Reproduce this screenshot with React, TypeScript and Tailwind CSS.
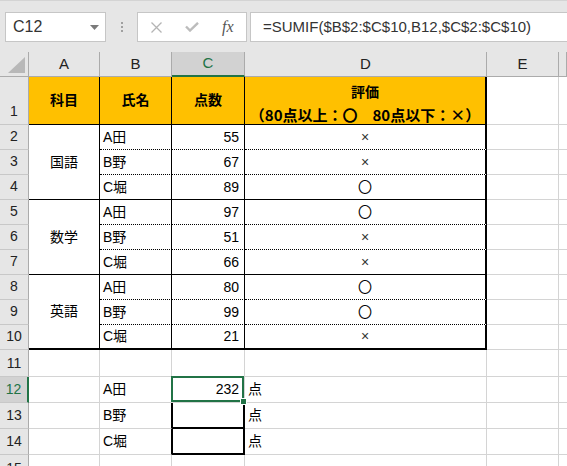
import React from "react";

const GRID = "border-r border-b border-[#d4d4d4]";
const HEAD = "flex items-center justify-center bg-[#e6e6e6] border-r border-b border-[#ababab] text-[15px] text-[#222]";
const ROWHEAD =
  "flex items-end justify-center pb-[2px] bg-[#e6e6e6] border-r border-b border-r-[#ababab] border-b-[#c8c8c8] text-[14px] text-[#222]";

type Row = { no: number; subject?: string; name: string; score: number; mark: string };

const rows: Row[] = [
  { no: 2, subject: "国語", name: "A田", score: 55, mark: "×" },
  { no: 3, name: "B野", score: 67, mark: "×" },
  { no: 4, name: "C堀", score: 89, mark: "〇" },
  { no: 5, subject: "数学", name: "A田", score: 97, mark: "〇" },
  { no: 6, name: "B野", score: 51, mark: "×" },
  { no: 7, name: "C堀", score: 66, mark: "×" },
  { no: 8, subject: "英語", name: "A田", score: 80, mark: "〇" },
  { no: 9, name: "B野", score: 99, mark: "〇" },
  { no: 10, name: "C堀", score: 21, mark: "×" },
];

const FormulaBar = () => (
  <div className="h-[52px] bg-[#e6e6e6] border-t border-[#d4d4d4] flex items-start pt-[11px]">
    <div className="ml-[5px] w-[101px] h-[30px] bg-white border border-[#c6c6c6] flex items-center justify-between pl-[7px] pr-[6px]">
      <span className="text-[16px] text-[#333]">C12</span>
      <svg width="9" height="5" viewBox="0 0 9 5">
        <path d="M0 0 H9 L4.5 5 Z" fill="#7a7a7a" />
      </svg>
    </div>
    <div className="w-[31px] h-[30px] flex flex-col items-center justify-center gap-[2px]">
      <div className="w-[2px] h-[2px] bg-[#a0a0a0]" />
      <div className="w-[2px] h-[2px] bg-[#a0a0a0]" />
      <div className="w-[2px] h-[2px] bg-[#a0a0a0]" />
    </div>
    <div className="w-[110px] h-[30px] bg-white border border-[#c6c6c6] flex items-center pl-[13px] gap-[23px]">
      <svg width="11" height="11" viewBox="0 0 11 11">
        <path d="M0.5 0.5 L10.5 10.5 M10.5 0.5 L0.5 10.5" stroke="#b4b4b4" strokeWidth="1.3" fill="none" />
      </svg>
      <svg width="14" height="10" viewBox="0 0 14 10">
        <path d="M1 4.5 L5 8.5 L13 0.8" stroke="#bcbcbc" strokeWidth="2.4" fill="none" />
      </svg>
      <span className="[font-family:'Liberation_Serif',serif] italic text-[16px] text-[#555] leading-none">fx</span>
    </div>
    <div className="ml-[3px] flex-1 h-[30px] bg-white border border-r-0 border-[#c6c6c6] pl-[12px] flex items-center text-[15px] text-[#333] whitespace-nowrap">
      =SUMIF($B$2:$C$10,B12,$C$2:$C$10)
    </div>
  </div>
);

export default function App() {
  return (
    <div className="w-[567px] h-[466px] overflow-hidden bg-white [font-family:'Liberation_Sans','Noto_Sans_CJK_JP',sans-serif] text-[14px] text-black">
      <FormulaBar />
      <div className="grid grid-cols-[29px_71px_72px_73px_242px_72px_1fr] grid-rows-[25px_48px_repeat(9,25px)_27px_26px_26px_26px_26px]">
        {/* column headers */}
        <div className="relative bg-[#e6e6e6] border-r border-b border-[#ababab]">
          <svg className="absolute right-[3px] bottom-[3px]" width="17" height="16" viewBox="0 0 17 16">
            <path d="M17 0 V16 H0 Z" fill="#b8b8b8" />
          </svg>
        </div>
        <div className={HEAD}>A</div>
        <div className={HEAD}>B</div>
        <div className="flex items-center justify-center bg-[#d2d2d2] border-r border-r-[#ababab] border-b-2 border-b-[#217346] text-[15px] text-[#217346]">
          C
        </div>
        <div className={HEAD}>D</div>
        <div className={HEAD}>E</div>
        <div className={HEAD}></div>

        {/* row 1 */}
        <div className={ROWHEAD}>1</div>
        <div className="bg-[#ffc000] border-r border-b border-black flex items-center justify-center font-bold">科目</div>
        <div className="bg-[#ffc000] border-r border-b border-black flex items-center justify-center font-bold">氏名</div>
        <div className="bg-[#ffc000] border-r border-b border-black flex items-center justify-center font-bold">点数</div>
        <div className="bg-[#ffc000] border-r-2 border-b border-black flex flex-col items-center justify-center pt-[4px] font-bold leading-[23px] [font-family:'Noto_Sans_CJK_JP',sans-serif]">
          <span>評価</span>
          <span className="whitespace-nowrap text-[15px]">（80点以上：〇　80点以下：×）</span>
        </div>
        <div className={GRID}></div>
        <div className="border-b border-[#d4d4d4]"></div>

        {/* rows 2-10 */}
        {rows.map((r, i) => {
          const last = i % 3 === 2;
          const final = i === rows.length - 1;
          const bottom = final ? "border-b-2" : last ? "border-b" : "border-b [border-bottom-style:dotted]";
          return (
            <React.Fragment key={r.no}>
              <div className={ROWHEAD}>{r.no}</div>
              {r.subject && (
                <div
                  className={
                    i === 6
                      ? "row-span-3 border-r border-b-2 border-black flex items-center justify-center"
                      : "row-span-3 border-r border-b border-black flex items-center justify-center"
                  }
                >
                  {r.subject}
                </div>
              )}
              <div className={`border-r border-black flex items-center pl-[3px] ${bottom}`}>{r.name}</div>
              <div className={`border-r border-black flex items-center justify-end pr-[5px] ${bottom}`}>{r.score}</div>
              <div className={`border-r-2 border-black flex items-center justify-center ${bottom}`}>
                {r.mark === "×" ? <span className="text-[14px] text-[#333]">×</span> : <span>〇</span>}
              </div>
              <div className={GRID}></div>
              <div className="border-b border-[#d4d4d4]"></div>
            </React.Fragment>
          );
        })}

        {/* row 11 */}
        <div className={ROWHEAD}>11</div>
        <div className={GRID}></div>
        <div className={GRID}></div>
        <div className={GRID}></div>
        <div className={GRID}></div>
        <div className={GRID}></div>
        <div className="border-b border-[#d4d4d4]"></div>

        {/* row 12 */}
        <div className="flex items-end justify-center pb-[2px] bg-[#d2d2d2] border-r-2 border-b border-r-[#217346] border-b-[#c8c8c8] text-[14px] text-[#217346]">
          12
        </div>
        <div className={GRID}></div>
        <div className={`${GRID} flex items-center pl-[3px]`}>A田</div>
        <div className="relative z-10 border-r border-b border-[#d4d4d4] flex items-center justify-end pr-[5px]">
          232
          <div className="absolute -left-px -top-px right-0 bottom-0 border-2 border-[#217346]" />
          <div className="absolute -right-[3px] -bottom-[3px] w-[7px] h-[7px] bg-[#217346] border border-white" />
        </div>
        <div className={`${GRID} flex items-center pl-[3px]`}>点</div>
        <div className={GRID}></div>
        <div className="border-b border-[#d4d4d4]"></div>

        {/* rows 13-14 */}
        {[
          { no: 13, name: "B野" },
          { no: 14, name: "C堀" },
        ].map((r) => (
          <React.Fragment key={r.no}>
            <div className={ROWHEAD}>{r.no}</div>
            <div className={GRID}></div>
            <div className="border-r border-b border-r-black border-b-[#d4d4d4] flex items-center pl-[3px]">{r.name}</div>
            <div className="border-l border-r-2 border-b-2 border-black"></div>
            <div className={`${GRID} flex items-center pl-[3px]`}>点</div>
            <div className={GRID}></div>
            <div className="border-b border-[#d4d4d4]"></div>
          </React.Fragment>
        ))}

        {/* row 15 */}
        <div className="flex items-start justify-center pt-[3px] bg-[#e6e6e6] border-r border-b border-r-[#ababab] border-b-[#c8c8c8] text-[14px] text-[#222]">
          15
        </div>
        <div className={GRID}></div>
        <div className={GRID}></div>
        <div className={GRID}></div>
        <div className={GRID}></div>
        <div className={GRID}></div>
        <div className="border-b border-[#d4d4d4]"></div>
      </div>
    </div>
  );
}
